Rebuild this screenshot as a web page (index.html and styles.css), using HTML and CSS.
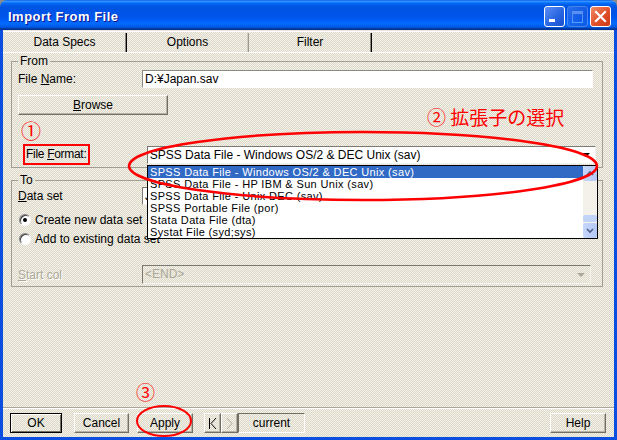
FILE: index.html
```html
<!DOCTYPE html>
<html>
  <head>
    <title>Import From File</title>
    <meta charset="UTF-8">
    <link rel="stylesheet" href="styles.css">
  </head>
  <body>
<div class="window">

<!-- title bar -->
<div class="titlebar">
<span class="title">Import From File</span>
<div class="controls">
<span class="ctl min"><span class="minbar"></span></span>
<span class="ctl max"><span class="maxbox"></span></span>
<span class="ctl close">
<svg width="21" height="21" viewBox="0 0 21 21"><path d="M6 6 L15 15 M15 6 L6 15" stroke="#fff" stroke-width="2.2" stroke-linecap="square"/></svg>
</span>
</div>
</div>

<div class="frame">

<!-- tabs -->
<div class="tabs">
<div class="tab first">Data Specs</div>
<div class="tab middle">Options</div>
<div class="tab last">Filter</div>
</div>

<!-- From -->
<fieldset class="group from">
<legend>From</legend>
<div class="row tall">
<label class="lbl">File <u>N</u>ame:</label>
<div class="field">D:¥Japan.sav</div>
</div>
<div class="btn browse"><u>B</u>rowse</div>
<div class="row format">
<label class="marked">File <u>F</u>ormat:</label>
<div class="combo formatbox">SPSS Data File - Windows OS/2 &amp; DEC Unix (sav)<span class="arrow"></span></div>
</div>
</fieldset>

<!-- To -->
<fieldset class="group to">
<legend>To</legend>
<div class="row tall">
<label class="lbl"><u>D</u>ata set</label>
<div class="combo dataset">J<span class="arrow"></span></div>
</div>
<div class="radio first"><span class="dot on"></span>Create new data set</div>
<div class="radio second"><span class="dot"></span>Add to existing data set</div>
<div class="row start">
<label class="lbl off"><u>S</u>tart col</label>
<div class="combo startbox off">&lt;END&gt;<span class="arrow"></span></div>
</div>
</fieldset>

<!-- buttons -->
<div class="footer">
<div class="btn ok">OK</div>
<div class="btn cancel">Cancel</div>
<div class="btn apply">Apply</div>
<div class="btn nav first-rec">
<svg width="15" height="18" viewBox="0 0 15 18"><path d="M4.5 4 V15 M11 4 L6 9.5 L11 15" stroke="#000" fill="none"/></svg>
</div>
<div class="btn nav next-rec">
<svg width="14" height="18" viewBox="0 0 14 18"><path d="M5 4 L10 9.5 L5 15" stroke="#aca899" fill="none"/></svg>
</div>
<div class="current">current</div>
<div class="btn help">Help</div>
</div>

</div>

<!-- open drop-down list -->
<div class="droplist">
<ul class="items">
<li class="sel">SPSS Data File - Windows OS/2 &amp; DEC Unix (sav)</li>
<li>SPSS Data File - HP IBM &amp; Sun Unix (sav)</li>
<li>SPSS Data File - Unix DEC (sav)</li>
<li>SPSS Portable File (por)</li>
<li>Stata Data File (dta)</li>
<li>Systat File (syd;sys)</li>
</ul>
<div class="scroll">
<div class="sbtn">
<svg width="14" height="15" viewBox="0 0 14 15"><path d="M4 9 L7 6 L10 9" stroke="#4d6185" stroke-width="1.6" fill="none"/></svg>
</div>
<div class="track"></div>
<div class="thumb"></div>
<div class="sbtn">
<svg width="14" height="15" viewBox="0 0 14 15"><path d="M4 6 L7 9 L10 6" stroke="#4d6185" stroke-width="1.6" fill="none"/></svg>
</div>
</div>
</div>

<!-- red notes -->
<svg class="marks" width="617" height="440" viewBox="0 0 617 440">
<ellipse cx="363" cy="166" rx="234" ry="34" fill="none" stroke="#f00" stroke-width="2.5"/>
<ellipse cx="164" cy="421" rx="27" ry="15" fill="none" stroke="#f00" stroke-width="2"/>
</svg>
<span class="note n1">①</span>
<span class="note n2">② 拡張子の選択</span>
<span class="note n3">③</span>

</div>
  </body>
</html>
```

FILE: styles.css
```css
body{
margin: 0;
background-color: #8a8a8a;
font: 12px "Liberation Sans", Arial, sans-serif;
color: black;
}

u{
text-decoration-thickness: 1px;
text-underline-offset: 1px;
}

.window{
position: relative;
width: 617px;
height: 440px;
display: flex;
flex-direction: column;
}

/* title bar */
.titlebar{
height: 30px;
flex: none;
box-sizing: border-box;
padding: 6px 6px 0 8px;
display: flex;
align-items: center;
border-radius: 7px 7px 0 0;
background: linear-gradient(#0058ee 0%, #3a93ff 4%, #288eff 6%, #127dff 8%, #036ffc 10%, #0262ee 14%, #0057e5 20%, #0054e3 24%, #0055eb 56%, #005bf5 66%, #026afe 76%, #0062ef 86%, #0052d6 92%, #0040ab 94%, #003092 100%);
}

.title{
flex: 1;
margin-top: -3px;
color: white;
font-weight: bold;
font-size: 13px;
letter-spacing: .5px;
text-shadow: 1px 1px #0f1089;
}

.controls{
display: flex;
gap: 2px;
margin-top: -4px;
}

.ctl{
position: relative;
width: 21px;
height: 21px;
box-sizing: border-box;
border: 1px solid white;
border-radius: 3px;
background: linear-gradient(135deg, #5c8ff5, #2663e0 60%, #1c4fcf);
}

.minbar{
position: absolute;
left: 4px;
bottom: 4px;
width: 6px;
height: 3px;
background: white;
}

.max{
opacity: .45;
border-color: #9db8f2;
}

.maxbox{
position: absolute;
left: 4px;
top: 4px;
width: 9px;
height: 8px;
border: 1px solid #c8d8ff;
border-top-width: 3px;
}

.close{
background: linear-gradient(135deg, #f08a68, #e0502a 55%, #c8391a);
}

.close svg{
position: absolute;
left: -1px;
top: -1px;
}

/* window body */
.frame{
flex: 1;
display: flex;
flex-direction: column;
border: 3px solid #0a4fe0;
border-top: 0;
background: repeating-conic-gradient(#f6f3e3 0% 25%, #d9d7cf 0% 50%) 0 0 / 2px 2px;
}

.tabs{
display: flex;
height: 19px;
margin-top: 1px;
padding-top: 1px;
border-top: 1px solid white;
border-bottom: 1px solid white;
}

.tab{
box-sizing: border-box;
line-height: 19px;
text-align: center;
border-right: 1px solid black;
box-shadow: inset -1px 0 #8a887e;
}

.tab.first{
width: 124px;
}

.tab.middle{
width: 122px;
border-right-color: #9c9a90;
box-shadow: inset -1px 0 #cfcdc2;
}

.tab.last{
width: 123px;
}

/* group boxes */
.group{
margin: 1px 11px 0 8px;
padding: 2px 6px 2px 6px;
min-width: 0;
border: 1px solid #a19f94;
}

.group legend{
padding: 0 2px;
line-height: 14px;
}

.group.to{
margin-top: 5px;
padding-top: 0;
}

.row{
display: flex;
align-items: center;
}

.row.tall{
height: 18px;
}

.lbl{
width: 124px;
flex: none;
}

.lbl.off{
color: #aca899;
text-shadow: 1px 1px white;
}

.field{
width: 451px;
height: 18px;
box-sizing: border-box;
padding-left: 2px;
line-height: 16px;
background: white;
border: 1px solid;
border-color: #8d8b82 #fff #fff #8d8b82;
}

.btn{
box-sizing: border-box;
height: 20px;
line-height: 18px;
text-align: center;
border: 1px solid;
border-color: #fff #716f64 #716f64 #fff;
box-shadow: inset -1px -1px #b5b3a8;
}

.browse{
width: 150px;
margin-top: 7px;
}

.row.format{
height: 21px;
margin-top: 29px;
}

.marked{
width: 67px;
height: 21px;
box-sizing: border-box;
margin-left: 5px;
padding-left: 1px;
line-height: 17px;
letter-spacing: -.3px;
white-space: nowrap;
overflow: hidden;
border: 2px solid red;
}

.combo{
position: relative;
box-sizing: border-box;
padding-left: 2px;
background: white;
border: 1px solid;
border-color: #7b7a72 #f4f4f0 #f4f4f0 #7b7a72;
}

.arrow{
position: absolute;
right: 5px;
top: 50%;
margin-top: -2px;
border-left: 4px solid transparent;
border-right: 4px solid transparent;
border-top: 4px solid black;
}

.formatbox{
width: 451px;
height: 18px;
line-height: 16px;
margin-left: 57px;
}

.dataset{
width: 455px;
height: 18px;
line-height: 16px;
}

.startbox{
width: 449px;
height: 19px;
line-height: 17px;
}

.combo.off{
color: #aca899;
background: transparent;
}

.combo.off .arrow{
border-top-color: #aca899;
}

.row.start{
height: 19px;
margin-top: 19px;
}

.radio{
display: flex;
align-items: center;
height: 14px;
}

.radio.first{
margin-top: 8px;
}

.radio.second{
margin-top: 5px;
}

.dot{
position: relative;
width: 12px;
height: 12px;
margin: 0 4px 0 1px;
border-radius: 50%;
box-sizing: border-box;
background: white;
border: 1px solid;
border-color: #848284 #fff #fff #848284;
box-shadow: inset 1px 1px #404040;
}

.dot.on::after{
content: "";
position: absolute;
left: 3px;
top: 3px;
width: 4px;
height: 4px;
border-radius: 50%;
background: black;
}

/* bottom buttons */
.footer{
margin-top: auto;
display: flex;
align-items: center;
height: 20px;
padding: 5px 8px 4px 7px;
border-top: 1px solid #aca899;
box-shadow: inset 0 1px white;
}

.ok{
width: 52px;
border: 1px solid black;
box-shadow: inset 1px 1px white, inset -1px -1px #716f64;
}

.cancel{
width: 55px;
margin-left: 12px;
}

.apply{
width: 56px;
margin-left: 8px;
}

.nav{
width: 17px;
}

.first-rec{
margin-left: 11px;
}

.nav svg{
display: block;
}

.current{
width: 67px;
height: 20px;
box-sizing: border-box;
line-height: 18px;
text-align: center;
border: 1px solid;
border-color: #716f64 #fff #fff #716f64;
}

.help{
width: 56px;
margin-left: auto;
}

/* open list of the file format box */
.droplist{
position: absolute;
left: 147px;
top: 165px;
width: 451px;
height: 74px;
box-sizing: border-box;
display: flex;
background: white;
border: 1px solid black;
}

.items{
flex: 1;
margin: 0;
padding: 0;
list-style: none;
font-size: 11px;
letter-spacing: .35px;
}

.items li{
height: 12px;
line-height: 12px;
padding-left: 2px;
white-space: nowrap;
}

.items li.sel{
background: #316ac5;
color: white;
}

.scroll{
width: 14px;
display: flex;
flex-direction: column;
background: #f3f1ea;
}

.sbtn{
height: 15px;
border-radius: 2px;
background: linear-gradient(90deg, #c6d6fb, #b4c8f6);
}

.sbtn svg{
display: block;
}

.track{
flex: 1;
}

.thumb{
height: 7px;
margin-bottom: 1px;
border-radius: 2px;
background: #c2d3fa;
}

/* red notes on the screenshot */
.marks{
position: absolute;
left: 0;
top: 0;
pointer-events: none;
}

.note{
position: absolute;
color: red;
font-family: "Noto Sans CJK JP", sans-serif;
line-height: 1;
}

.n1{
left: 21px;
top: 121px;
font-size: 20px;
}

.n2{
left: 427px;
top: 107px;
font-size: 19px;
}

.n3{
left: 136px;
top: 382px;
font-size: 19px;
}
```
